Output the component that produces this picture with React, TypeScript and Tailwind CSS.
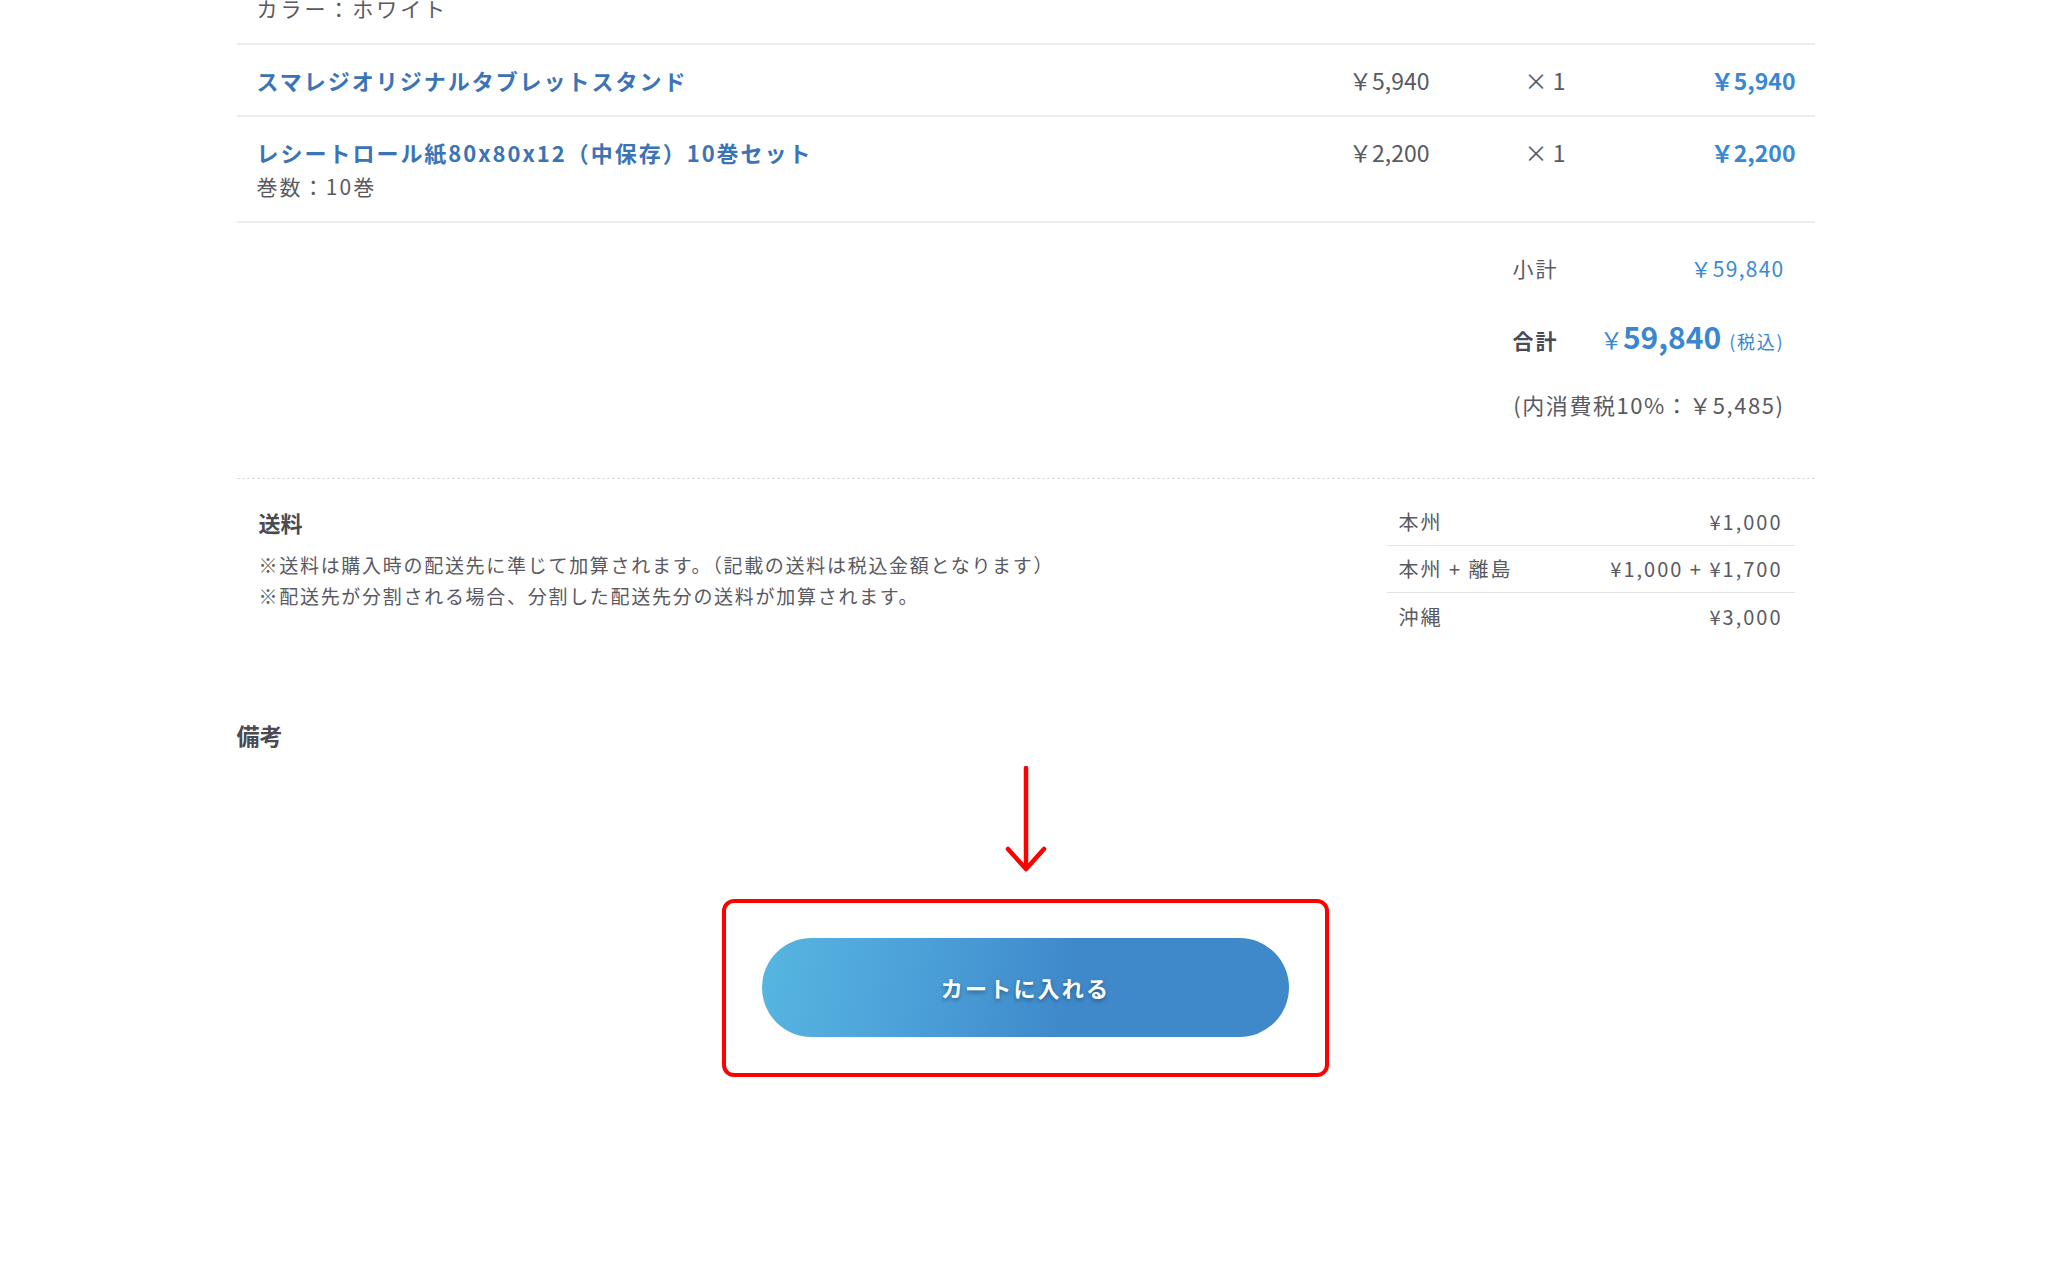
import React from 'react';

type Item = {
  name: string;
  option?: string;
  price: string;
  qty: number;
  total: string;
};

const items: Item[] = [
  { name: 'スマレジオリジナルタブレットスタンド', price: '￥5,940', qty: 1, total: '￥5,940' },
  {
    name: 'レシートロール紙80x80x12（中保存）10巻セット',
    option: '巻数：10巻',
    price: '￥2,200',
    qty: 1,
    total: '￥2,200',
  },
];

const shipping = [
  { area: '本州', fee: '¥1,000' },
  { area: '本州 + 離島', fee: '¥1,000 + ¥1,700' },
  { area: '沖縄', fee: '¥3,000' },
];

function ItemRow({ item }: { item: Item }) {
  return (
    <div className="flex items-start border-b-2 border-[#ededed] py-[18px] pl-5 pr-[19px]">
      <div className="flex-1">
        <p className="text-[22px] font-bold leading-[34px] tracking-[0.09em] text-[#3b74b6]">{item.name}</p>
        {item.option && <p className="text-[21px] leading-[34px] tracking-[0.1em]">{item.option}</p>}
      </div>
      <div className="w-[160px] text-right text-[23px] leading-[34px]">{item.price}</div>
      <div className="w-[216px] pl-[95px] text-[23px] leading-[34px]">× {item.qty}</div>
      <div className="w-[150px] text-right text-[23px] font-bold leading-[34px] text-[#3a88d0]">{item.total}</div>
    </div>
  );
}

function ArrowDown() {
  return (
    <svg width="44" height="106" viewBox="0 0 44 106" className="mx-auto block">
      <path d="M22 2 L22 102" stroke="#ff0000" strokeWidth="4.5" strokeLinecap="round" fill="none" />
      <path d="M4 83 L22 103 L40 83" stroke="#ff0000" strokeWidth="4.5" strokeLinecap="round" strokeLinejoin="round" fill="none" />
    </svg>
  );
}

export default function App() {
  return (
    <div className="min-h-screen overflow-hidden bg-white font-['Noto_Sans_CJK_JP','Noto_Sans',sans-serif] text-[#595962]">
      <div className="mx-auto w-[1578px]">
        {/* Cart items (scrolled) */}
        <div className="-mt-[9px] border-b-2 border-[#ededed] pb-[18px] pl-5 text-[21px] leading-[34px] tracking-[0.14em]">
          カラー：ホワイト
        </div>
        {items.map((item) => (
          <ItemRow key={item.name} item={item} />
        ))}

        {/* Totals */}
        <div className="flex justify-end border-b border-dashed border-[#dcdcdc] pb-[57px] pr-[30px] pt-[28px]">
          <div className="flex w-[272px] flex-col gap-[34px] text-[21px] leading-[34px]">
            <div className="flex h-[34px] justify-between">
              <span className="tracking-[0.1em]">小計</span>
              <span className="tracking-[0.06em] text-[#3b8ad3]">￥59,840</span>
            </div>
            <div className="flex h-[34px] items-baseline justify-between">
              <span className="font-bold tracking-[0.1em] text-[#4a4a54]">合計</span>
              <span className="leading-[34px] text-[#3a87cf]">
                <span className="text-[23px]">￥</span>
                <span className="text-[30px] font-bold">59,840</span>
                <span className="ml-[8px] text-[18px] tracking-[0.1em]">(税込)</span>
              </span>
            </div>
            <div className="flex h-[34px] justify-end whitespace-nowrap text-[22px] tracking-[0.07em]">(内消費税10%：￥5,485)</div>
          </div>
        </div>

        {/* Shipping */}
        <div className="flex justify-between pr-5 pt-5">
          <div className="pl-[22px] pt-[6px]">
            <p className="text-[22px] font-bold leading-[34px] text-[#4a4a54]">送料</p>
            <p className="mt-[10px] text-[19px] leading-[31px] tracking-[0.09em]">
              ※送料は購入時の配送先に準じて加算されます。（記載の送料は税込金額となります）
              <br />
              ※配送先が分割される場合、分割した配送先分の送料が加算されます。
            </p>
          </div>
          <div className="w-[408px]">
            {shipping.map((s, i) => (
              <div
                key={s.area}
                className={`flex h-[47px] items-center justify-between pl-3 pr-[12px] text-[20px] tracking-[0.1em] ${
                  i < shipping.length - 1 ? 'border-b border-[#e3e3e3]' : ''
                }`}
              >
                <span>{s.area}</span>
                <span>{s.fee}</span>
              </div>
            ))}
          </div>
        </div>

        {/* Notes */}
        <p className="mt-[78px] text-[23px] font-bold leading-[34px] text-[#4a4a54]">備考</p>

        {/* Add to cart */}
        <div className="mt-[14px]">
          <ArrowDown />
        </div>
        <div className="mx-auto mt-[27px] w-[607px] rounded-[12px] border-4 border-[#ff0000] px-[36px] pb-[36px] pt-[35px]">
          <button className="flex h-[99px] w-full items-center justify-center rounded-full bg-[linear-gradient(100deg,#57b6e1_0%,#4ba0d8_30%,#3f89cb_58%,#3f89cb_100%)] text-[22px] font-bold tracking-[0.1em] text-white [text-shadow:0_2px_4px_rgba(0,0,0,0.35)]">
            カートに入れる
          </button>
        </div>
      </div>
    </div>
  );
}
